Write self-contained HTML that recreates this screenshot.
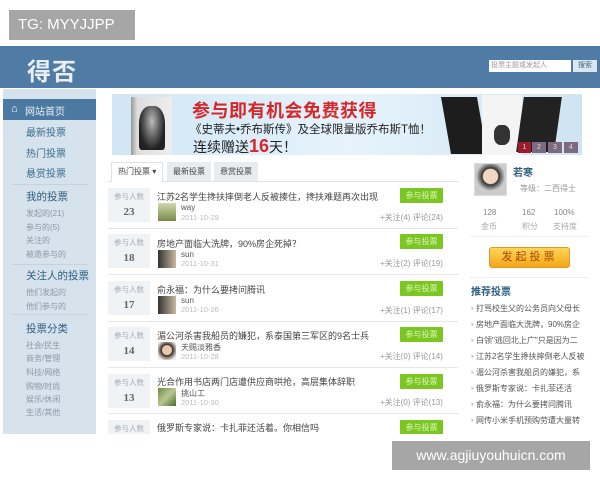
<!DOCTYPE html>
<html><head><meta charset="utf-8"><style>
*{margin:0;padding:0;box-sizing:border-box}
body{width:600px;height:480px;background:#fff;position:relative;overflow:hidden;font-family:"Liberation Sans","Noto Sans CJK SC",sans-serif;color:#333}
.a{position:absolute;white-space:nowrap}
.sb{font-size:10px;color:#3c6e8e}
.sub{font-size:8px;color:#8a9aa6}
.hd{font-size:10.5px;color:#2e6080}
.cnt{position:absolute;left:108px;width:42px;height:34px;background:#f0f3f5;text-align:center}
.cnt i{display:block;font-style:normal;font-size:7.5px;color:#aab;margin-top:3px}
.cnt b{display:block;font-size:11px;color:#666;margin-top:4px;font-family:"Liberation Serif",serif}
.t{font-size:9px;color:#444}
.btn{position:absolute;left:400px;width:43px;height:15px;background:#7cc622;color:#dff5c0;font-size:8px;text-align:center;line-height:15px;border-radius:1px}
.fl{font-size:8px;color:#999}
.av{position:absolute;left:158px;width:18px;height:18px}
.nm{font-size:8px;color:#555}
.dt{font-size:7.5px;color:#bbb}
.ln{position:absolute;left:108px;width:350px;height:1px;background:#e5e8ea}
.rl{font-size:8px;color:#555}
.rl:before{content:"• ";color:#bbb}
</style></head><body>
<div class="a" style="left:9px;top:10px;width:126px;height:30px;background:#a6a6a6;color:#fff;font-size:15px;line-height:30px;padding-left:9px">TG: MYYJJPP</div>
<div class="a" style="left:0;top:46px;width:600px;height:42px;background:#4f7ba4"></div>
<div class="a" style="left:27px;top:52px;font-size:24px;font-weight:bold;color:#e8eef4;letter-spacing:1px">得否</div>
<div class="a" style="left:489px;top:60px;width:82px;height:12px;background:#fff;font-size:7px;color:#999;line-height:12px;padding-left:2px">投票主题或发起人</div>
<div class="a" style="left:573px;top:60px;width:24px;height:12px;background:#dbe6ee;font-size:7px;color:#3a6a8a;line-height:12px;text-align:center">搜索</div>
<div class="a" style="left:3px;top:89px;width:93px;height:345px;background:#d6e2ec"></div>
<div class="a" style="left:96px;top:89px;width:504px;height:345px;background:#fff"></div>
<div class="a" style="left:3px;top:99px;width:93px;height:21px;background:#4c79a2"></div>
<div class="a" style="left:11px;top:103px;font-size:11px;color:#fff">⌂</div>
<div class="a" style="left:25px;top:103px;font-size:10px;color:#e8f0f6">网站首页</div>
<div class="a sb" style="left:26px;top:124px">最新投票</div>
<div class="a sb" style="left:26px;top:145px">热门投票</div>
<div class="a sb" style="left:26px;top:165px">悬赏投票</div>
<div class="a" style="left:12px;top:184px;width:76px;height:1px;background:#c5d3de"></div>
<div class="a hd" style="left:26px;top:189px">我的投票</div>
<div class="a sub" style="left:26px;top:208px">发起的(21)</div>
<div class="a sub" style="left:26px;top:222px">参与的(5)</div>
<div class="a sub" style="left:26px;top:235px">关注的</div>
<div class="a sub" style="left:26px;top:249px">被邀参与的</div>
<div class="a" style="left:12px;top:264px;width:76px;height:1px;background:#c5d3de"></div>
<div class="a hd" style="left:26px;top:268px">关注人的投票</div>
<div class="a sub" style="left:26px;top:287px">他们发起的</div>
<div class="a sub" style="left:26px;top:301px">他们参与的</div>
<div class="a" style="left:12px;top:314px;width:76px;height:1px;background:#c5d3de"></div>
<div class="a hd" style="left:26px;top:321px">投票分类</div>
<div class="a sub" style="left:26px;top:340px">社会/民生</div>
<div class="a sub" style="left:26px;top:353px">商务/管理</div>
<div class="a sub" style="left:26px;top:367px">科技/网络</div>
<div class="a sub" style="left:26px;top:381px">购物/时尚</div>
<div class="a sub" style="left:26px;top:394px">娱乐/休闲</div>
<div class="a sub" style="left:26px;top:407px">生活/其他</div>
<!-- banner -->
<div class="a" style="left:112px;top:94px;width:470px;height:61px;background:linear-gradient(90deg,#cfe6f5,#e6f3fb 50%,#cfe4f2)"></div>
<div class="a" style="left:131px;top:97px;width:41px;height:58px;background:linear-gradient(90deg,#999,#ddd 15%,#eee)"></div>
<div class="a" style="left:139px;top:106px;width:26px;height:44px;background:radial-gradient(ellipse at 50% 35%,#bbb,#555 45%,#222 70%);border-radius:40% 40% 10% 10%"></div>
<div class="a" style="left:192px;top:97px;font-size:18px;font-weight:bold;color:#d7262a;letter-spacing:0.5px">参与即有机会免费获得</div>
<div class="a" style="left:190px;top:121px;font-size:11.5px;color:#222">《史蒂夫•乔布斯传》及全球限量版乔布斯T恤！</div>
<div class="a" style="left:193px;top:136px;font-size:14px;color:#222">连续赠送<b style="color:#d7262a;font-size:18px">16</b>天！</div>
<div class="a" style="left:446px;top:97px;width:36px;height:57px;background:#1d1d1d;transform:skewX(10deg)"></div>
<div class="a" style="left:482px;top:95px;width:40px;height:60px;background:#f4f4f4"></div>
<div class="a" style="left:494px;top:125px;width:16px;height:20px;background:#333;border-radius:40%"></div>
<div class="a" style="left:520px;top:97px;width:38px;height:55px;background:#222;transform:skewX(-8deg)"></div>
<div class="a" style="left:518px;top:142px;width:13px;height:11px;background:#9a1f2a;color:#ecc;font-size:7px;text-align:center;line-height:11px">1</div>
<div class="a" style="left:532px;top:142px;width:14px;height:11px;background:#7d6a80;color:#ddd;font-size:7px;text-align:center;line-height:11px">2</div>
<div class="a" style="left:548px;top:142px;width:14px;height:11px;background:#7d6a80;color:#ddd;font-size:7px;text-align:center;line-height:11px">3</div>
<div class="a" style="left:564px;top:142px;width:14px;height:11px;background:#7d6a80;color:#ddd;font-size:7px;text-align:center;line-height:11px">4</div>
<!-- tabs -->
<div class="a" style="left:108px;top:181px;width:350px;height:1px;background:#dde2e6"></div>
<div class="a" style="left:111px;top:162px;width:52px;height:20px;background:#fff;border:1px solid #dde2e6;border-bottom:none;font-size:8px;color:#444;line-height:18px;padding-left:6px">热门投票 ▾</div>
<div class="a" style="left:167px;top:162px;width:44px;height:19px;background:#e8ecef;font-size:8px;color:#444;line-height:19px;text-align:center">最新投票</div>
<div class="a" style="left:214px;top:162px;width:44px;height:19px;background:#e8ecef;font-size:8px;color:#444;line-height:19px;text-align:center">悬赏投票</div>
<!-- rows -->
<div class="cnt" style="top:188px"><i>参与人数</i><b>23</b></div>
<div class="a t" style="left:157px;top:190px">江苏2名学生搀扶摔倒老人反被揍住，搀扶难题再次出现</div>
<div class="av" style="top:203px;background:linear-gradient(#cfd8b0,#7a8a4a)"></div>
<div class="a nm" style="left:181px;top:203px">way</div><div class="a dt" style="left:181px;top:213px">2011-10-29</div>
<div class="btn" style="top:188px">参与投票</div>
<div class="a fl" style="left:380px;top:212px">+关注(4) 评论(24)</div>
<div class="ln" style="top:228px"></div>

<div class="cnt" style="top:234px"><i>参与人数</i><b>18</b></div>
<div class="a t" style="left:157px;top:237px">房地产面临大洗牌，90%房企死掉？</div>
<div class="av" style="top:250px;background:linear-gradient(90deg,#333,#c8b8a0)"></div>
<div class="a nm" style="left:181px;top:250px">sun</div><div class="a dt" style="left:181px;top:259px">2011-10-31</div>
<div class="btn" style="top:234px">参与投票</div>
<div class="a fl" style="left:380px;top:258px">+关注(2) 评论(19)</div>
<div class="ln" style="top:274px"></div>

<div class="cnt" style="top:281px"><i>参与人数</i><b>17</b></div>
<div class="a t" style="left:157px;top:283px">俞永福：为什么要拷问腾讯</div>
<div class="av" style="top:296px;background:linear-gradient(90deg,#333,#c8b8a0)"></div>
<div class="a nm" style="left:181px;top:296px">sun</div><div class="a dt" style="left:181px;top:305px">2011-10-26</div>
<div class="btn" style="top:281px">参与投票</div>
<div class="a fl" style="left:380px;top:305px">+关注(1) 评论(17)</div>
<div class="ln" style="top:321px"></div>

<div class="cnt" style="top:327px"><i>参与人数</i><b>14</b></div>
<div class="a t" style="left:157px;top:329px">湄公河杀害我船员的嫌犯，系泰国第三军区的9名士兵</div>
<div class="av" style="top:342px;background:radial-gradient(circle at 50% 45%,#e8c8b0 35%,#3a2a20 40%,#eee 80%)"></div>
<div class="a nm" style="left:181px;top:342px">天赐淡雅香</div><div class="a dt" style="left:181px;top:352px">2011-10-28</div>
<div class="btn" style="top:327px">参与投票</div>
<div class="a fl" style="left:380px;top:351px">+关注(0) 评论(14)</div>
<div class="ln" style="top:367px"></div>

<div class="cnt" style="top:374px"><i>参与人数</i><b>13</b></div>
<div class="a t" style="left:157px;top:375px">光合作用书店两门店遭供应商哄抢，高层集体辞职</div>
<div class="av" style="top:388px;background:linear-gradient(135deg,#6a8a4a,#b8c890,#4a6a30)"></div>
<div class="a nm" style="left:181px;top:388px">挑山工</div><div class="a dt" style="left:181px;top:398px">2011-10-30</div>
<div class="btn" style="top:374px">参与投票</div>
<div class="a fl" style="left:380px;top:397px">+关注(0) 评论(13)</div>
<div class="ln" style="top:413px"></div>

<div class="cnt" style="top:420px;height:14px"><i>参与人数</i></div>
<div class="a t" style="left:157px;top:421px">俄罗斯专家说：卡扎菲还活着。你相信吗</div>
<div class="btn" style="top:420px;height:14px">参与投票</div>
<!-- right col -->
<div class="a" style="left:474px;top:163px;width:33px;height:33px;border:1px solid #ddd;background:radial-gradient(circle at 50% 40%,#f2d6c0 30%,#333 34%,#ccc 60%)"></div>
<div class="a" style="left:513px;top:164px;font-size:10px;color:#2e6080;font-weight:bold">若寒</div>
<div class="a" style="left:520px;top:183px;font-size:8px;color:#999">等级：二西得士</div>
<div class="a" style="left:483px;top:208px;font-size:8px;color:#888">128</div>
<div class="a" style="left:481px;top:221px;font-size:8px;color:#aaa">金币</div>
<div class="a" style="left:522px;top:208px;font-size:8px;color:#888">162</div>
<div class="a" style="left:522px;top:221px;font-size:8px;color:#aaa">积分</div>
<div class="a" style="left:554px;top:208px;font-size:8px;color:#888">100%</div>
<div class="a" style="left:553px;top:221px;font-size:8px;color:#aaa">支持度</div>
<div class="a" style="left:470px;top:236px;width:118px;height:1px;background:#eee"></div>
<div class="a" style="left:489px;top:247px;width:81px;height:21px;background:linear-gradient(#ffd35a,#f5a616);border:1px solid #e09a20;border-radius:3px;font-size:11px;color:#a04a00;text-align:center;line-height:19px;letter-spacing:3px">发起投票</div>
<div class="a" style="left:470px;top:277px;width:118px;height:1px;background:#eee"></div>
<div class="a" style="left:471px;top:283px;font-size:10px;color:#2e6080;font-weight:bold">推荐投票</div>
<div class="a rl" style="left:471px;top:303px">打骂校生父的公务员向父母长</div>
<div class="a rl" style="left:471px;top:319px">房地产面临大洗牌，90%房企</div>
<div class="a rl" style="left:471px;top:335px">白领"逃回北上广"只是因为二</div>
<div class="a rl" style="left:471px;top:351px">江苏2名学生搀扶摔倒老人反被</div>
<div class="a rl" style="left:471px;top:367px">湄公河杀害我船员的嫌犯，系</div>
<div class="a rl" style="left:471px;top:383px">俄罗斯专家说：卡扎菲还活</div>
<div class="a rl" style="left:471px;top:399px">俞永福：为什么要拷问腾讯</div>
<div class="a rl" style="left:471px;top:415px">网传小米手机预购劳遭大量转</div>
<div class="a" style="left:0;top:434px;width:600px;height:46px;background:#fff"></div>
<div class="a" style="left:392px;top:441px;width:198px;height:29px;background:#a6a6a6;color:#fff;font-size:14px;line-height:29px;text-align:center">www.agjiuyouhuicn.com</div>
</body></html>
